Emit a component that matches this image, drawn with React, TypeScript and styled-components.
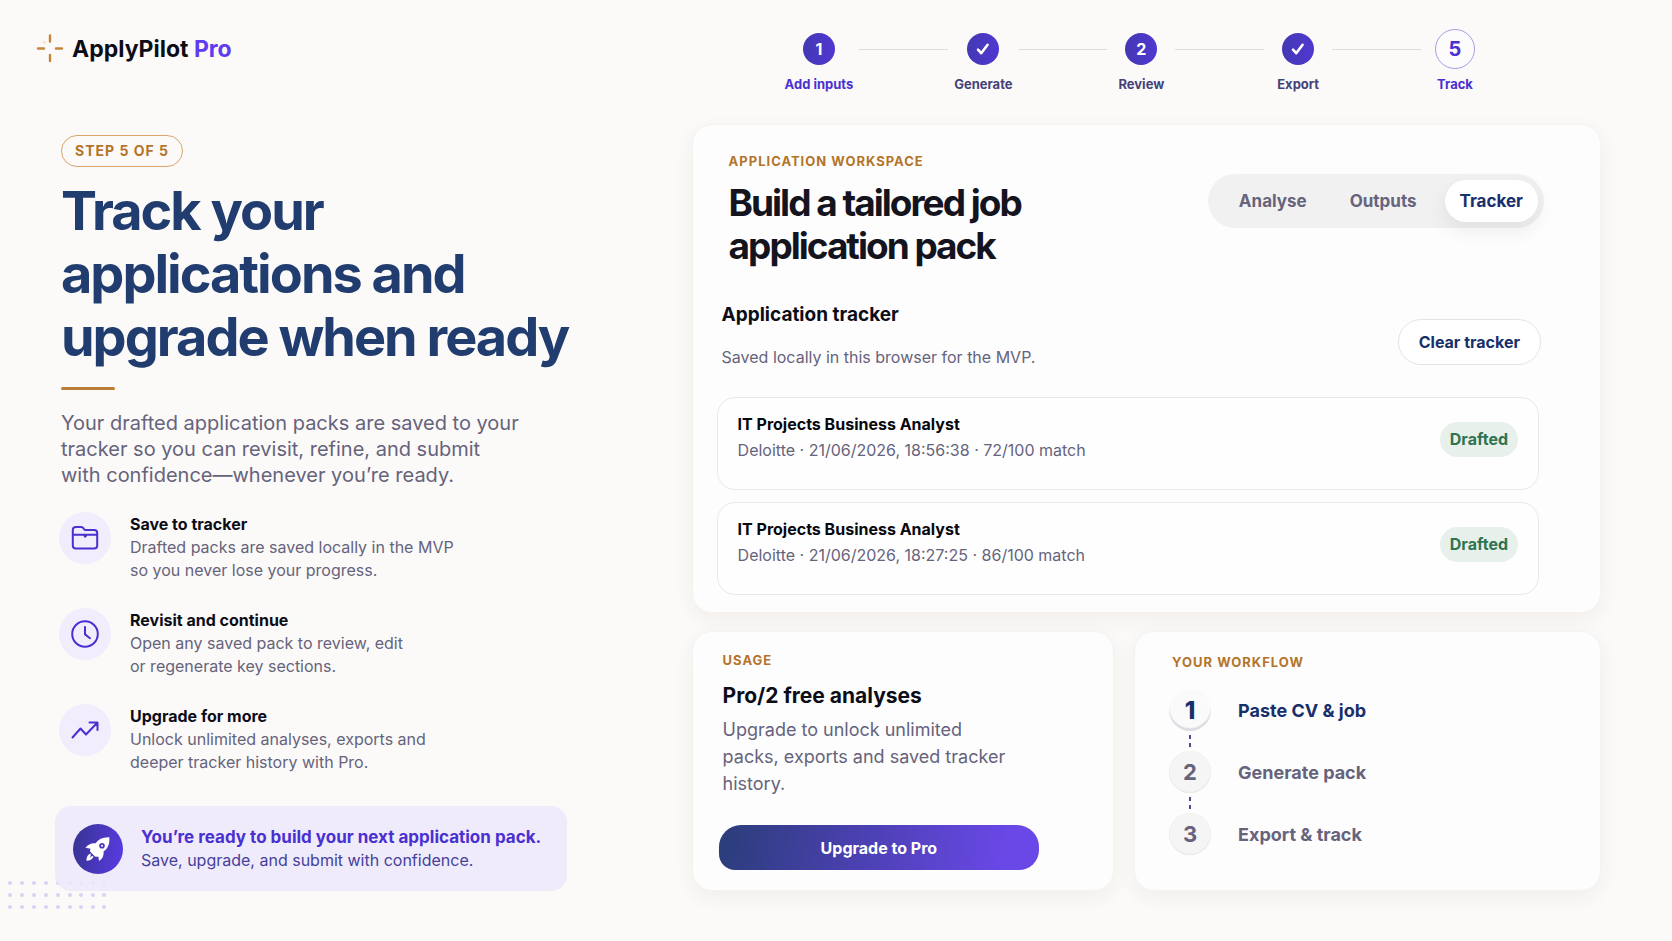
import React from "react";
import styled, { createGlobalStyle, css } from "styled-components";

const GlobalStyle = createGlobalStyle`
  *, *::before, *::after { box-sizing: border-box; }
  body {
    margin: 0;
    background: #fbfaf8;
    color: #0f0f1a;
    font-family: Inter, "Liberation Sans", sans-serif;
    -webkit-font-smoothing: antialiased;
  }
  h1, h2, h3, p, ol, ul { margin: 0; padding: 0; }
  ol, ul { list-style: none; }
  button { font-family: inherit; cursor: pointer; }
`;

const color = {
  ink: "#0d0d18",
  navy: "#213c6e",
  blue: "#182f6b",
  muted: "#66637c",
  violet: "#4a30d0",
  gold: "#b3742a",
};

const Page = styled.div`
  position: relative;
  min-height: 100vh;
  padding: 0 71px 50px 55px;
  overflow: hidden;
`;

const columns = css`
  display: grid;
  grid-template-columns: minmax(0, 7fr) minmax(0, 10fr);
`;

const Header = styled.header`
  ${columns}
  height: 124px;
  align-items: start;
`;

const Brand = styled.a`
  display: flex;
  align-items: center;
  gap: 8px;
  margin: 34px 0 0 -19px;
  color: ${color.ink};
  font-size: 23px;
  font-weight: 700;
  line-height: 30px;
  text-decoration: none;

  em {
    color: #5f3cf0;
    font-style: normal;
  }
`;

const Steps = styled.ol`
  display: flex;
  margin: 29px 114px 0 89px;
`;

const Step = styled.li<{ $accent: boolean }>`
  display: flex;
  flex-direction: column;
  align-items: center;
  gap: 6px;
  min-width: 64px;
  padding: 0 4px;
  color: ${(p) => (p.$accent ? color.violet : "#45427a")};
  font-size: 13px;
  font-weight: 700;
  line-height: 18px;
  white-space: nowrap;
`;

const StepMark = styled.span<{ $current: boolean }>`
  display: grid;
  place-items: center;
  width: ${(p) => (p.$current ? 40 : 32)}px;
  height: ${(p) => (p.$current ? 40 : 32)}px;
  margin: ${(p) => (p.$current ? 0 : 4)}px 0;
  border: ${(p) => (p.$current ? "1px solid #a79ce6" : "0")};
  border-radius: 50%;
  background: ${(p) => (p.$current ? "#fdfcfd" : "linear-gradient(90deg, #4438b4, #5038d0)")};
  color: ${(p) => (p.$current ? color.violet : "#fff")};
  font-size: ${(p) => (p.$current ? 20 : 16)}px;
  font-weight: 700;
`;

const Connector = styled.li`
  flex: 1;
  height: 1px;
  margin: 20px 2px 0;
  background: #dcdde1;
`;

const Body = styled.main`
  ${columns}
  align-items: start;
`;

const Story = styled.section`
  padding-top: 11px;
`;

const Intro = styled.div`
  padding: 0 6px;
`;

const StepBadge = styled.span`
  display: inline-block;
  padding: 0 13px;
  border: 1px solid #d9a66c;
  border-radius: 16px;
  color: ${color.gold};
  font-size: 14px;
  font-weight: 700;
  letter-spacing: 1px;
  line-height: 30px;
  vertical-align: top;
`;

const Headline = styled.h1`
  margin-top: 12px;
  color: ${color.navy};
  font-size: 54px;
  font-weight: 700;
  letter-spacing: -2px;
  line-height: 63px;
`;

const Rule = styled.div`
  width: 54px;
  height: 3px;
  margin-top: 19px;
  border-radius: 2px;
  background: #b97e35;
`;

const Lead = styled.p`
  margin-top: 20px;
  color: ${color.muted};
  font-size: 20px;
  line-height: 26px;
`;

const Features = styled.ul`
  display: flex;
  flex-direction: column;
  gap: 26px;
  margin-top: 24px;
  padding: 0 4px;
`;

const Feature = styled.li`
  display: flex;
  align-items: flex-start;
  gap: 19px;
`;

const FeatureIcon = styled.span`
  display: grid;
  flex: none;
  place-items: center;
  width: 52px;
  height: 52px;
  border-radius: 50%;
  background: #f1edfc;
  color: ${color.violet};
`;

const FeatureTitle = styled.h3`
  color: ${color.ink};
  font-size: 16px;
  font-weight: 700;
  line-height: 24px;
`;

const FeatureText = styled.p`
  color: ${color.muted};
  font-size: 16px;
  line-height: 23px;
`;

const Callout = styled.aside`
  position: relative;
  display: flex;
  align-items: center;
  gap: 18px;
  width: 512px;
  max-width: 100%;
  height: 85px;
  margin-top: 32px;
  padding: 0 18px;
  border-radius: 16px;
  background: rgba(236, 231, 251, 0.85);
  color: #45419a;
  font-size: 16px;
  line-height: 23px;

  strong {
    display: block;
    color: ${color.violet};
    font-size: 17px;
    font-weight: 700;
  }
`;

const CalloutIcon = styled.span`
  display: grid;
  flex: none;
  place-items: center;
  width: 50px;
  height: 50px;
  border-radius: 50%;
  background: linear-gradient(100deg, #37348f, #5a3be6);
  color: #fff;
`;

const DotField = styled.svg`
  position: absolute;
  left: 4px;
  top: 877px;
`;

const Workspace = styled.div`
  display: grid;
  gap: 18px;
`;

const Card = styled.section`
  border: 1px solid #f5f3f2;
  border-radius: 20px;
  background: #fdfdfd;
  box-shadow: 0 6px 20px rgba(80, 50, 30, 0.06);
`;

const TrackerCard = styled(Card)`
  padding: 28px 61px 17px 24px;
`;

const WorkspaceHead = styled.div`
  display: flex;
  justify-content: space-between;
  margin-right: -5px;
  padding-left: 12px;
`;

const Eyebrow = styled.p`
  color: ${color.gold};
  font-size: 13px;
  font-weight: 700;
  letter-spacing: 1px;
  line-height: 16px;
`;

const WorkspaceTitle = styled.h2`
  margin-top: 12px;
  color: #14141f;
  font-size: 37px;
  font-weight: 700;
  letter-spacing: -2px;
  line-height: 43px;
`;

const Tabs = styled.div`
  display: flex;
  align-self: flex-start;
  gap: 13px;
  margin-top: 21px;
  padding: 6px 6px 6px 16px;
  border-radius: 27px;
  background: #f1f1f1;
`;

const Tab = styled.button<{ $active: boolean }>`
  height: 42px;
  padding: 0 15px;
  border: 0;
  border-radius: 21px;
  background: ${(p) => (p.$active ? "#fff" : "transparent")};
  box-shadow: ${(p) => (p.$active ? "0 8px 20px rgba(20, 20, 40, 0.08)" : "none")};
  color: ${(p) => (p.$active ? color.blue : color.muted)};
  font-size: 17px;
  font-weight: 700;
`;

const TrackerHead = styled.div`
  display: flex;
  align-items: flex-start;
  justify-content: space-between;
  margin: 34px -2px 0 0;
  padding-left: 5px;
`;

const SectionTitle = styled.h3`
  color: ${color.ink};
  font-size: 19px;
  font-weight: 700;
  line-height: 28px;
`;

const SectionNote = styled.p`
  margin-top: 16px;
  color: ${color.muted};
  font-size: 16px;
  line-height: 24px;
`;

const ClearButton = styled.button`
  height: 46px;
  margin-top: 18px;
  padding: 0 20px;
  border: 1px solid #e4e4e8;
  border-radius: 23px;
  background: #fff;
  color: ${color.blue};
  font-size: 16px;
  font-weight: 700;
`;

const PackList = styled.ul`
  display: grid;
  gap: 12px;
  margin-top: 28px;
`;

const Pack = styled.li`
  display: flex;
  align-items: flex-start;
  justify-content: space-between;
  padding: 13px 20px 26px;
  border: 1px solid #e8e8ea;
  border-radius: 18px;
  background: #fefefe;
`;

const PackTitle = styled.h3`
  color: #08080f;
  font-size: 16px;
  font-weight: 700;
  line-height: 26px;
`;

const PackMeta = styled.p`
  color: ${color.muted};
  font-size: 16px;
  line-height: 26px;
`;

const Status = styled.span`
  margin-top: 11px;
  padding: 0 10px;
  border-radius: 18px;
  background: #e8f0eb;
  color: #2f7350;
  font-size: 16px;
  font-weight: 700;
  line-height: 35px;
`;

const LowerRow = styled.div`
  display: grid;
  grid-template-columns: minmax(0, 19fr) minmax(0, 21fr);
  gap: 20px;
`;

const UsageCard = styled(Card)`
  padding: 20px 26px;
`;

const UsageCopy = styled.div`
  max-width: 300px;
  padding-left: 4px;
`;

const UsageTitle = styled.h2`
  margin-top: 14px;
  color: ${color.ink};
  font-size: 21px;
  font-weight: 700;
  line-height: 28px;
`;

const UsageText = styled.p`
  margin-top: 6px;
  color: ${color.muted};
  font-size: 18px;
  line-height: 27px;
`;

const UpgradeButton = styled.button`
  width: 87%;
  height: 45px;
  margin-top: 28px;
  border: 0;
  border-radius: 22px 22px 20px 16px;
  background: linear-gradient(100deg, #2a3d78, #4840ac 40%, #6a48e8 90%);
  color: #fff;
  font-size: 16px;
  font-weight: 700;
`;

const WorkflowCard = styled(Card)`
  padding: 22px 34px;

  ${Eyebrow} {
    padding-left: 3px;
  }
`;

const WorkflowSteps = styled.ol`
  display: grid;
  gap: 20px;
  margin-top: 19px;
`;

const WorkflowStep = styled.li<{ $active: boolean }>`
  position: relative;
  display: flex;
  align-items: center;
  gap: 27px;
  color: ${(p) => (p.$active ? color.blue : color.muted)};
  font-size: 18px;
  font-weight: 700;

  &:not(:last-child)::after {
    content: "";
    position: absolute;
    left: 20px;
    bottom: -16px;
    width: 2px;
    height: 12px;
    background: linear-gradient(#4a4a94 0 4px, transparent 4px 8px, #4a4a94 8px);
  }
`;

const WorkflowMark = styled.span<{ $active: boolean }>`
  display: grid;
  place-items: center;
  width: 42px;
  height: 42px;
  border-radius: 50%;
  background: ${(p) => (p.$active ? "#fafafb" : "#f5f5f5")};
  box-shadow: ${(p) =>
    p.$active ? "inset 0 -3px 1px #dcdde2" : "inset 0 -1px 1px #e6e6e8, inset 0 0 1px #e6e6e8"};
  font-size: ${(p) => (p.$active ? 24 : 22)}px;
  font-weight: ${(p) => (p.$active ? 800 : 700)};
`;

const LogoMark = () => (
  <svg width="28" height="30" viewBox="0 0 28 30" fill="none" stroke="#c4863c" strokeWidth="2.4" strokeLinecap="round" aria-hidden="true">
    <circle cx="8.500" cy="8.500" r="1.800" fill="#f6e6d2" stroke="none" />
    <path d="M14 1.500v6M14 21v6M2 14.500h6M20 14.500h6" />
  </svg>
);

const Check = () => (
  <svg width="16" height="16" viewBox="0 0 16 16" fill="none" stroke="#fff" strokeWidth="2.6" strokeLinecap="round" strokeLinejoin="round" aria-hidden="true">
    <path d="M3 8.6l3.2 3.6L12.6 3.8" />
  </svg>
);

const line = {
  fill: "none",
  stroke: "currentColor",
  strokeWidth: 2,
  strokeLinecap: "round",
  strokeLinejoin: "round",
} as const;

const FolderIcon = () => (
  <svg width="28" height="28" viewBox="0 0 28 28" {...line} aria-hidden="true">
    <path d="M1.800 6a3 3 0 0 1 3-3h5.400c1 0 1.600.4 2.200 1.200l.8 1.200c.3.4.7.6 1.200.6h8.800a3 3 0 0 1 3 3v12.400a3 3 0 0 1-3 3H4.800a3 3 0 0 1-3-3z" />
    <path d="M2 10.800h24M13 11.200l1.200 1.500 1.200-1.500" />
  </svg>
);

const ClockIcon = () => (
  <svg width="28" height="28" viewBox="0 0 28 28" {...line} aria-hidden="true">
    <circle cx="14" cy="14" r="12.8" />
    <path d="M14 7v7.400l5 3.800" />
  </svg>
);

const TrendIcon = () => (
  <svg width="28" height="28" viewBox="0 0 28 28" {...line} aria-hidden="true">
    <path d="M1.500 21.500l8-9 5.500 6L26 7M18.500 6.500h8v7.500" />
  </svg>
);

const RocketIcon = () => (
  <svg width="28" height="28" viewBox="0 0 28 28" fill="currentColor" aria-hidden="true">
    <path
      fillRule="evenodd"
      d="M25.300 2.300C19 2 14.500 4 11.500 8.300 7.500 7.800 4 9.300 1.500 12.800l5 .9c-.6 1.200-.6 2.300 0 3.300l4.500 4.400c1.100.5 2.200.5 3.400.1l.6 4.500c3.500-2 5-5.500 4.600-9.400C24 13.500 26 8.600 25.300 2.300zM18 7.900a2.800 2.800 0 1 0 0 5.600 2.800 2.800 0 0 0 0-5.600z"
    />
    <circle cx="18" cy="10.700" r="1" />
    <path d="M6.600 18.500c-2.900 1-4.100 3.500-4.200 7.300 3.500-.2 6-1.700 7.200-4.400l-1.700-.5-1.900 1.800.8-2.500z" />
  </svg>
);

const steps = [
  { mark: "1", label: "Add inputs", accent: true },
  { mark: <Check />, label: "Generate" },
  { mark: "2", label: "Review" },
  { mark: <Check />, label: "Export" },
  { mark: "5", label: "Track", accent: true, current: true },
];

const features = [
  { icon: <FolderIcon />, title: "Save to tracker", lines: ["Drafted packs are saved locally in the MVP", "so you never lose your progress."] },
  { icon: <ClockIcon />, title: "Revisit and continue", lines: ["Open any saved pack to review, edit", "or regenerate key sections."] },
  { icon: <TrendIcon />, title: "Upgrade for more", lines: ["Unlock unlimited analyses, exports and", "deeper tracker history with Pro."] },
];

const packs = [
  { title: "IT Projects Business Analyst", meta: "Deloitte · 21/06/2026, 18:56:38 · 72/100 match" },
  { title: "IT Projects Business Analyst", meta: "Deloitte · 21/06/2026, 18:27:25 · 86/100 match" },
];

const workflow = ["Paste CV & job", "Generate pack", "Export & track"];

export default function App() {
  const [tab, setTab] = React.useState("Tracker");

  return (
    <Page>
      <GlobalStyle />
      <DotField width="108" height="36" viewBox="0 0 108 36" fill="#d9d2f2" aria-hidden="true">
        {[6, 18, 30].map((y) =>
          [6, 18, 30, 42, 54, 66, 77, 89, 100].map((x) => <circle key={`${x}-${y}`} cx={x} cy={y} r="2" />)
        )}
      </DotField>

      <Header>
        <Brand href="#">
          <LogoMark />
          <span>
            ApplyPilot <em>Pro</em>
          </span>
        </Brand>
        <Steps>
          {steps.map((s, i) => (
            <React.Fragment key={s.label}>
              {i > 0 && <Connector aria-hidden="true" />}
              <Step $accent={!!s.accent} aria-current={s.current ? "step" : undefined}>
                <StepMark $current={!!s.current}>{s.mark}</StepMark>
                {s.label}
              </Step>
            </React.Fragment>
          ))}
        </Steps>
      </Header>

      <Body>
        <Story>
          <Intro>
            <StepBadge>STEP 5 OF 5</StepBadge>
            <Headline>
              Track your
              <br />
              applications and
              <br />
              upgrade when ready
            </Headline>
            <Rule />
            <Lead>
              Your drafted application packs are saved to your
              <br />
              tracker so you can revisit, refine, and submit
              <br />
              with confidence—whenever you’re ready.
            </Lead>
          </Intro>
          <Features>
            {features.map((f) => (
              <Feature key={f.title}>
                <FeatureIcon>{f.icon}</FeatureIcon>
                <div>
                  <FeatureTitle>{f.title}</FeatureTitle>
                  <FeatureText>
                    {f.lines[0]}
                    <br />
                    {f.lines[1]}
                  </FeatureText>
                </div>
              </Feature>
            ))}
          </Features>
          <Callout>
            <CalloutIcon>
              <RocketIcon />
            </CalloutIcon>
            <p>
              <strong>You’re ready to build your next application pack.</strong>
              Save, upgrade, and submit with confidence.
            </p>
          </Callout>
        </Story>

        <Workspace>
          <TrackerCard>
            <WorkspaceHead>
              <div>
                <Eyebrow>APPLICATION WORKSPACE</Eyebrow>
                <WorkspaceTitle>
                  Build a tailored job
                  <br />
                  application pack
                </WorkspaceTitle>
              </div>
              <Tabs role="tablist">
                {["Analyse", "Outputs", "Tracker"].map((name) => (
                  <Tab key={name} role="tab" aria-selected={tab === name} $active={tab === name} onClick={() => setTab(name)}>
                    {name}
                  </Tab>
                ))}
              </Tabs>
            </WorkspaceHead>
            <TrackerHead>
              <div>
                <SectionTitle>Application tracker</SectionTitle>
                <SectionNote>Saved locally in this browser for the MVP.</SectionNote>
              </div>
              <ClearButton>Clear tracker</ClearButton>
            </TrackerHead>
            <PackList>
              {packs.map((p) => (
                <Pack key={p.meta}>
                  <div>
                    <PackTitle>{p.title}</PackTitle>
                    <PackMeta>{p.meta}</PackMeta>
                  </div>
                  <Status>Drafted</Status>
                </Pack>
              ))}
            </PackList>
          </TrackerCard>

          <LowerRow>
            <UsageCard>
              <UsageCopy>
                <Eyebrow>USAGE</Eyebrow>
                <UsageTitle>Pro/2 free analyses</UsageTitle>
                <UsageText>Upgrade to unlock unlimited packs, exports and saved tracker history.</UsageText>
              </UsageCopy>
              <UpgradeButton>Upgrade to Pro</UpgradeButton>
            </UsageCard>
            <WorkflowCard>
              <Eyebrow>YOUR WORKFLOW</Eyebrow>
              <WorkflowSteps>
                {workflow.map((name, i) => (
                  <WorkflowStep key={name} $active={i === 0}>
                    <WorkflowMark $active={i === 0}>{i + 1}</WorkflowMark>
                    {name}
                  </WorkflowStep>
                ))}
              </WorkflowSteps>
            </WorkflowCard>
          </LowerRow>
        </Workspace>
      </Body>
    </Page>
  );
}
